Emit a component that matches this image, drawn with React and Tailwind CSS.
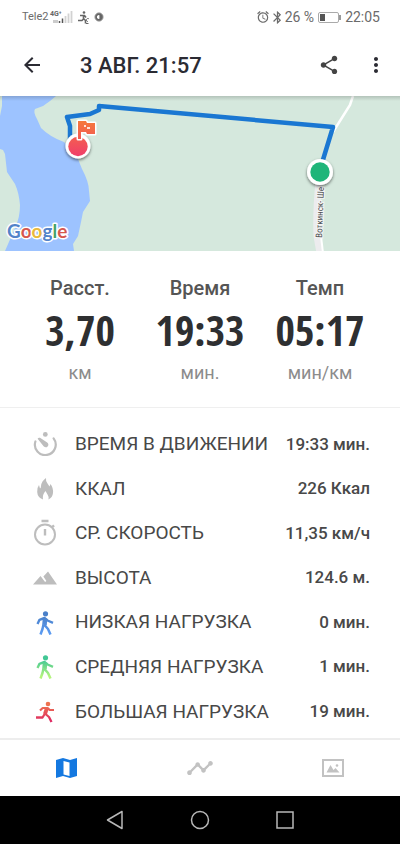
import React from "react";
import {
  MdArrowBack,
  MdShare,
  MdMoreVert,
  MdTimeline,
  MdAlarm,
  MdBluetooth,
} from "react-icons/md";

const stats = [
  { label: "Расст.", value: "3,70", unit: "км" },
  { label: "Время", value: "19:33", unit: "мин." },
  { label: "Темп", value: "05:17", unit: "мин/км" },
];

function MovingTimeIcon() {
  return (
    <svg viewBox="0 0 24 24" className="size-6" fill="none" stroke="#bdbdbd">
      <path d="M2.4 9.5A10.4 10.4 0 1 0 20.6 6.4" strokeWidth="2.2" strokeLinecap="round" />
      <path
        d="M4.6 6.8q.8-1.6 2.4-1L14.2 10.4q2.2 2.2.4 4t-4-.2z"
        fill="#bdbdbd"
        stroke="none"
      />
      <circle cx="12.3" cy="2.4" r="2.4" fill="#bdbdbd" stroke="none" />
    </svg>
  );
}

function FlameIcon() {
  return (
    <svg viewBox="0 0 18 24" className="h-6 w-[18px]" fill="#bdbdbd">
      <path d="M10 1q-.5 3 1.5 5.5l2 3 1-2.5q3 4 2.5 9-.5 4.500-4.500 6.500.5-3-1-5L9.500 14q-3.500 4-2.500 8.500Q1.500 20.500 1.200 15 1 10.500 3 8l1 3.500Q5 11 5 9q.5-5 5-8z" />
    </svg>
  );
}

function StopwatchIcon() {
  return (
    <svg viewBox="0 0 24 27" className="h-7 w-6" fill="none" stroke="#bdbdbd" strokeWidth="2">
      <circle cx="12" cy="15" r="10" />
      <path d="M8.5 1.5h7M12 9.5v6.5M18.8 8l2.2-2.2" strokeWidth="2.4" />
    </svg>
  );
}

function MountainIcon() {
  return (
    <svg viewBox="0 0 24 14" className="h-3.5 w-6" fill="#bdbdbd">
      <path d="M0 13.5L7.5 5l4.6 6 1.3-1-3-4.5L15 .5l9 13z" />
    </svg>
  );
}

function PersonIcon({ id, from, to, running }) {
  return (
    <svg viewBox="0 0 18 24" className="h-6 w-[18px]">
      <defs>
        <linearGradient id={id} gradientUnits="userSpaceOnUse" x1="0" y1="0" x2="0" y2="24">
          <stop offset="0.2" stopColor={from} />
          <stop offset="0.9" stopColor={to} />
        </linearGradient>
      </defs>
      <g fill="none" stroke={`url(#${id})`} strokeLinejoin="round">
        {running ? (
          <>
            <circle cx="12" cy="4" r="2.3" fill={`url(#${id})`} stroke="none" />
            <path d="M4 10.5L6.7 8h5l2 2H18" strokeWidth="2.2" />
            <path d="M10.8 8.5L9 14" strokeWidth="4" />
            <path d="M9 13.5L6.5 17.5H0M9.5 14l3.5 3 2.5 5" strokeWidth="2.3" />
          </>
        ) : (
          <>
            <circle cx="9.5" cy="2.8" r="2.6" fill={`url(#${id})`} stroke="none" />
            <path d="M1.5 13l2-4.2L8.5 7l3 2.5 5.5 2.3" strokeWidth="2.4" />
            <path d="M9 7.5L8.5 14" strokeWidth="4.6" />
            <path d="M7.5 13.5L6.5 18l-2 5.5M8.5 14l3.5 4 2.5 5.5" strokeWidth="2.5" />
          </>
        )}
      </g>
    </svg>
  );
}

const details = [
  { label: "ВРЕМЯ В ДВИЖЕНИИ", value: "19:33 мин.", icon: <MovingTimeIcon /> },
  { label: "ККАЛ", value: "226 Ккал", icon: <FlameIcon /> },
  { label: "СР. СКОРОСТЬ", value: "11,35 км/ч", icon: <StopwatchIcon /> },
  { label: "ВЫСОТА", value: "124.6 м.", icon: <MountainIcon /> },
  {
    label: "НИЗКАЯ НАГРУЗКА",
    value: "0 мин.",
    icon: <PersonIcon id="low" from="#4a80c9" to="#5a9af0" />,
  },
  {
    label: "СРЕДНЯЯ НАГРУЗКА",
    value: "1 мин.",
    icon: <PersonIcon id="medium" from="#42c795" to="#b4f47c" />,
  },
  {
    label: "БОЛЬШАЯ НАГРУЗКА",
    value: "19 мин.",
    icon: <PersonIcon id="high" from="#ee7350" to="#dd2863" running />,
  },
];

function StatusBar() {
  return (
    <div className="flex h-[34px] items-center justify-between pl-[22px] pr-5 text-[#6b6b6b]">
      <div className="flex items-center gap-1">
        <span className="text-[11px]">Tele2</span>
        <svg viewBox="0 0 24 14" className="-ml-1 h-3.5 w-6">
          <text x="1" y="6" fontSize="7" fontWeight="700" fill="#666">4G⁺</text>
          <path d="M4 11.5h5" stroke="#ccc" strokeWidth="3" />
          <path d="M10.5 13v-2M13.5 13V8.5" stroke="#555" strokeWidth="1.5" />
          <path d="M16.5 13V6M19.5 13V3.5M22.5 13V1" stroke="#d2d2d2" strokeWidth="1.8" />
        </svg>
        <svg viewBox="0 0 13 13" className="size-[13px]" fill="none" stroke="#666" strokeWidth="1.3">
          <circle cx="7" cy="1.5" r="1.3" fill="#666" stroke="none" />
          <path d="M3 4.5h4.5L9 6.5M6.5 4v4L5 9.5H1M6.5 7.5l2 2v3" strokeWidth="1.6" />
          <path d="M12 8a1.5 1.5 0 1 0-1 2.5M9 12.5h2.5" strokeWidth="1" />
        </svg>
        <svg viewBox="0 0 12 12" className="size-2.5">
          <circle cx="6" cy="6" r="5" fill="#666" stroke="#aaa" strokeWidth="1" />
          <path d="M6.5 4v4a2 2 0 0 1-3-2 2 2 0 0 1 3-2z" fill="#fff" />
        </svg>
      </div>
      <div className="flex items-center text-sm">
        <MdAlarm className="size-3.5" />
        <MdBluetooth className="size-[15px]" />
        <span>26 %</span>
        <svg viewBox="0 0 23 11" className="mx-1 h-[11px] w-[23px]">
          <rect x="0.5" y="0.5" width="20" height="10" rx="1.5" fill="none" stroke="#aaa" />
          <path d="M2 2h5v7H2z" fill="#555" />
          <path d="M22 3v5" stroke="#777" strokeWidth="1.5" />
        </svg>
        <span>22:05</span>
      </div>
    </div>
  );
}

function RouteMap() {
  return (
    <svg
      viewBox="0 0 400 155"
      preserveAspectRatio="xMidYMid slice"
      className="block h-[155px] w-full bg-[#d5e8dd]"
      role="img"
      aria-label="Карта"
    >
      <defs>
        <linearGradient id="finish" gradientUnits="userSpaceOnUse" x1="0" y1="25" x2="0" y2="62">
          <stop offset="0" stopColor="#f5793b" />
          <stop offset="1" stopColor="#f03b6d" />
        </linearGradient>
        <linearGradient id="shade" x1="0" y1="0" x2="0" y2="1">
          <stop offset="0" stopColor="#000" stopOpacity="0.16" />
          <stop offset="1" stopColor="#000" stopOpacity="0" />
        </linearGradient>
        <filter id="drop" x="-50%" y="-50%" width="200%" height="200%">
          <feDropShadow dx="0" dy="1.5" stdDeviation="1.5" floodOpacity="0.55" />
        </filter>
      </defs>
      <path
        d="M2 0H56L50 5 43 10 35 13Q33 16 37 23L41 32Q50 41 64 46L76 58 82 73Q89 86 89 95L90 105 83 116 81 126 78 140 73 148 74 155H5L15 132Q20 122 20 109 19 97 15 88L7 76 5 58 3 54 0 53V20L2 10Z"
        fill="#9dc3ff"
      />
      <path d="M353 0L350 9 333 36" fill="none" stroke="#fff" strokeWidth="2.5" />
      <path d="M319 85Q316 116 317 140L320 157" fill="none" stroke="#ececee" strokeWidth="7" />
      <path d="M321 140L323 157" fill="none" stroke="#fff" strokeWidth="2" />
      <text
        transform="translate(322 142) rotate(-88)"
        fontSize="9"
        fontFamily="'Roboto Condensed', Roboto, sans-serif"
        fill="#4b4f52"
        stroke="#f4f4f4"
        strokeWidth="2"
        paintOrder="stroke"
      >
        Воткинск- Ше
      </text>
      <path
        d="M70 44V30L67 21 90 18 99 14V10L333 31 322 67"
        fill="none"
        stroke="#1a77d2"
        strokeWidth="4.5"
        strokeLinejoin="round"
      />
      <circle cx="320" cy="76" r="13" fill="#fff" filter="url(#drop)" />
      <circle cx="320" cy="76" r="9.7" fill="#1fb579" />
      <circle cx="78" cy="50" r="12.5" fill="#fff" filter="url(#drop)" />
      <circle cx="78" cy="50.5" r="9.7" fill="url(#finish)" />
      <path
        d="M78 25h8l1 2h8v11h-8l-1-2h-5v7h-3z"
        fill="url(#finish)"
        stroke="#fff"
        strokeWidth="3"
        strokeLinejoin="round"
        paintOrder="stroke"
      />
      <path d="M84 29h2v2h-2zM87 31h3v2h-3z" fill="#fff" fillOpacity="0.8" />
      <text
        x="7"
        y="142"
        fontSize="19"
        fontWeight="700"
        fontFamily="Lato, sans-serif"
        stroke="#fff"
        strokeWidth="3"
        strokeLinejoin="round"
        paintOrder="stroke"
      >
        <tspan fill="#5383c9">G</tspan>
        <tspan fill="#d6574f">o</tspan>
        <tspan fill="#e9b93d">o</tspan>
        <tspan fill="#5383c9">g</tspan>
        <tspan fill="#42a366">l</tspan>
        <tspan fill="#d6574f">e</tspan>
      </text>
      <rect width="400" height="5" fill="url(#shade)" />
    </svg>
  );
}

function App() {
  return (
    <div className="flex min-h-screen flex-col bg-white font-[Roboto,sans-serif] text-[#484848]">
      <StatusBar />
      <header className="flex h-[62px] items-center px-5 text-[#2b2b33]">
        <button aria-label="Назад">
          <MdArrowBack className="size-6" />
        </button>
        <h1 className="ml-9 flex-1 text-[22px] font-medium">3 АВГ. 21:57</h1>
        <button aria-label="Поделиться" className="mr-6">
          <MdShare className="size-[22px] text-[#444]" />
        </button>
        <button aria-label="Ещё" className="-mr-2">
          <MdMoreVert className="size-6" />
        </button>
      </header>

      <RouteMap />

      <section className="grid h-[157px] grid-cols-3 border-b border-[#efefef] px-5 pt-6 text-center">
        {stats.map((stat) => (
          <div key={stat.label}>
            <p className="text-xl leading-[26px] font-medium text-[#555]">{stat.label}</p>
            <p className="font-['Open_Sans_Condensed','Roboto_Condensed',sans-serif] text-[42px] leading-[58px] font-bold text-[#2e2f31]">
              {stat.value}
            </p>
            <p className="text-lg leading-7 text-[#8c8c8c]">{stat.unit}</p>
          </div>
        ))}
      </section>

      <dl className="flex flex-1 flex-col pt-3.5 pb-1">
        {details.map((item) => (
          <div key={item.label} className="flex flex-1 items-center pr-[30px] pl-8">
            <dt className="flex flex-1 items-center gap-[17px] text-[19px] whitespace-nowrap">
              <span className="flex w-[26px] justify-center">{item.icon}</span>
              {item.label}
            </dt>
            <dd className="text-[17px] font-medium whitespace-nowrap">{item.value}</dd>
          </div>
        ))}
      </dl>

      <nav className="grid h-[58px] grid-cols-3 border-t-2 border-[#ededed]">
        <button aria-label="Карта" className="flex items-center justify-center">
          <svg viewBox="0 0 21 20" className="h-5 w-[21px]" fill="#1478e0">
            <path
              fillRule="evenodd"
              d="M0 2L7 0l7 2 7-2v18l-7 2-7-2-7 2zM7.5 3v13.5l6 1.5V4.5z"
            />
          </svg>
        </button>
        <button aria-label="График" className="flex items-center justify-center">
          <MdTimeline className="size-7 text-[#c2c2c2]" />
        </button>
        <button aria-label="Фото" className="flex items-center justify-center">
          <svg viewBox="0 0 22 18" className="h-[18px] w-[22px]" fill="#c2c2c2">
            <rect x="1" y="1" width="20" height="16" fill="none" stroke="#c2c2c2" strokeWidth="2" />
            <path d="M4.5 13.5L8.5 6l3 5 2-2 4 4.5z" />
            <circle cx="15" cy="6.5" r="1.3" />
          </svg>
        </button>
      </nav>

      <div className="flex h-12 items-center justify-center gap-[66px] bg-black">
        <button aria-label="Назад">
          <svg viewBox="0 0 18 20" className="h-5 w-[18px]" fill="none" stroke="#b8b8b8" strokeWidth="1.5">
            <path d="M16 1.5v17L1.5 10z" strokeLinejoin="round" />
          </svg>
        </button>
        <button aria-label="Домой">
          <svg viewBox="0 0 20 20" className="size-5" fill="none" stroke="#b8b8b8" strokeWidth="1.5">
            <circle cx="10" cy="10" r="8.5" />
          </svg>
        </button>
        <button aria-label="Недавние">
          <svg viewBox="0 0 18 18" className="size-[18px]" fill="none" stroke="#b8b8b8" strokeWidth="1.5">
            <rect x="1" y="1" width="16" height="16" />
          </svg>
        </button>
      </div>
    </div>
  );
}

export default App;
